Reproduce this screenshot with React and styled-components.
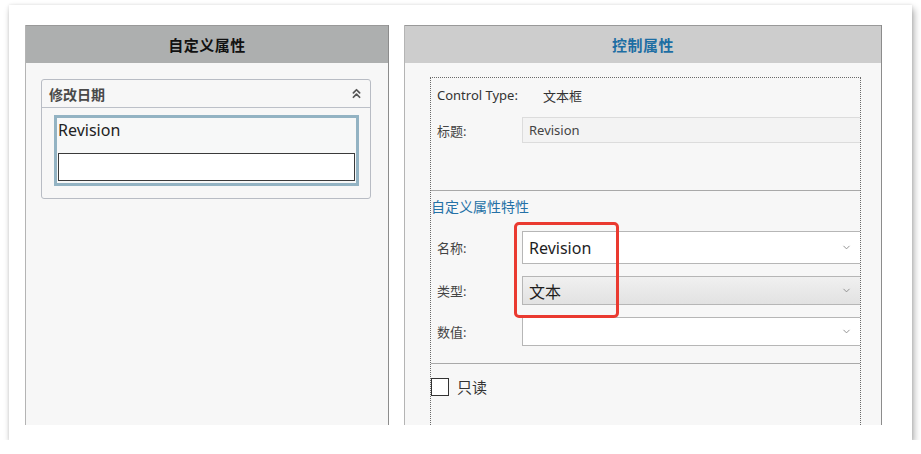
import styled, { createGlobalStyle } from 'styled-components';
import { ChevronsUp, ChevronDown } from 'lucide-react';

const GlobalStyle = createGlobalStyle`
    html, body {
        margin: 0;
        padding: 0;
        background: #ffffff;
    }
    body {
        font-family: "Noto Sans", "Noto Sans CJK SC", sans-serif;
        color: #333;
    }
`;

const Card = styled.div`
    box-sizing: border-box;
    margin: 5px 0 0 9px;
    width: 903px;
    height: 435px;
    padding: 20px 30px 15px 16px;
    background: #fff;
    box-shadow: 2px 4px 7px rgba(0, 0, 0, 0.32), 0 0 3px rgba(0, 0, 0, 0.1);
    display: flex;
    gap: 15px;
`;

const Panel = styled.section`
    box-sizing: border-box;
    width: ${(p) => p.$width}px;
    height: 100%;
    display: flex;
    flex-direction: column;
    background: #f7f7f7;
    border-left: 1px solid #b4b4b4;
    border-right: 1px solid #8c8c8c;
    overflow: hidden;
`;

const PanelHeader = styled.header`
    flex: none;
    height: 38px;
    box-sizing: border-box;
    border-top: 1px solid #999;
    background: ${(p) => p.$bg};
    color: ${(p) => p.$color};
    display: flex;
    align-items: center;
    justify-content: center;
    font-size: 15px;
    font-weight: bold;
    letter-spacing: 0.5px;
`;

/* left side */

const Group = styled.div`
    margin: 16px 0 0 15px;
    width: 330px;
    box-sizing: border-box;
    border: 1px solid #b8bcc4;
    border-radius: 3px;
    padding-bottom: 12px;
`;

const GroupHeader = styled.div`
    height: 28px;
    box-sizing: border-box;
    border-bottom: 1px solid #bcc0c8;
    display: flex;
    align-items: center;
    justify-content: space-between;
    padding: 0 6px 0 7px;
    font-size: 14px;
    font-weight: bold;
    color: #4a4a4a;
    svg {
        color: #555;
    }
`;

const FieldFrame = styled.div`
    margin: 7px 0 0 12px;
    width: 305px;
    box-sizing: border-box;
    border: 3px solid #93b3c3;
    background: #f7f8f8;
    padding: 0 1px 2px;
`;

const FieldCaption = styled.div`
    height: 35px;
    line-height: 24px;
    font-size: 16px;
    color: #222;
`;

const TextBox = styled.div`
    height: 28px;
    box-sizing: border-box;
    border: 1px solid #3a3a3a;
    background: #fff;
`;

/* right side */

const Dotted = styled.div`
    position: relative;
    margin: 14px 0 0 25px;
    width: 431px;
    flex: 1;
    box-sizing: border-box;
    border: 1px dotted #6a6a6a;
    border-bottom: none;
`;

const Section = styled.div`
    box-sizing: border-box;
    height: ${(p) => p.$height}px;
    padding: ${(p) => p.$pad || '0'};
    border-bottom: ${(p) => (p.$line ? '1px solid #a9a9a9' : 'none')};
`;

const InfoRow = styled.div`
    display: flex;
    align-items: center;
    height: 18px;
    padding-left: 6px;
    font-size: 13px;
    color: #333;
    span + span {
        margin-left: 25px;
    }
`;

const Row = styled.div`
    display: grid;
    grid-template-columns: 91px 1fr;
    align-items: center;
    margin-top: ${(p) => p.$top}px;
    height: ${(p) => p.$h}px;
`;

const Label = styled.span`
    padding-left: 6px;
    font-size: 13px;
    color: #444;
`;

const Field = styled.div`
    height: 100%;
    box-sizing: border-box;
    display: flex;
    align-items: center;
    justify-content: space-between;
    padding: 0 8px 0 6px;
    font-size: ${(p) => (p.$large ? 16 : 13)}px;
    color: ${(p) => (p.$large ? '#1e1e1e' : '#444')};
    border: 1px solid ${(p) => (p.$flat ? '#dcdcdc' : '#b6b6b6')};
    border-right: none;
    background: ${(p) =>
        p.$flat ? '#f3f3f3' : p.$combo ? 'linear-gradient(#f0f0f0, #e2e2e2)' : '#fff'};
    svg {
        color: #8a8a8a;
    }
`;

const SectionTitle = styled.div`
    margin-top: 6px;
    height: 20px;
    line-height: 20px;
    font-size: 14px;
    color: #2571a6;
`;

const CheckRow = styled.label`
    display: flex;
    align-items: center;
    gap: 8px;
    padding-top: 13px;
    font-size: 15px;
    line-height: 20px;
    color: #333;
`;

const CheckBox = styled.span`
    width: 18px;
    height: 18px;
    box-sizing: border-box;
    border: 1px solid #333;
    background: #fff;
`;

const Highlight = styled.div`
    position: absolute;
    left: 83px;
    top: 144px;
    width: 105px;
    height: 96px;
    box-sizing: border-box;
    border: 3px solid #ea3a30;
    border-radius: 5px;
    pointer-events: none;
`;

const Combo = ({ children, combo }) => (
    <Field $large $combo={combo}>
        <span>{children}</span>
        <ChevronDown size={11} strokeWidth={2} />
    </Field>
);

export default function App() {
    return (
        <>
            <GlobalStyle />
            <Card>
                <Panel $width={364}>
                    <PanelHeader $bg="#adafaf" $color="#111">自定义属性</PanelHeader>
                    <Group>
                        <GroupHeader>
                            <span>修改日期</span>
                            <ChevronsUp size={15} strokeWidth={2.8} />
                        </GroupHeader>
                        <FieldFrame>
                            <FieldCaption>Revision</FieldCaption>
                            <TextBox />
                        </FieldFrame>
                    </Group>
                </Panel>
                <Panel $width={478}>
                    <PanelHeader $bg="#cdcdcd" $color="#1d6ea3">控制属性</PanelHeader>
                    <Dotted>
                        <Section $height={113} $pad="8px 0 0" $line>
                            <InfoRow>
                                <span>Control Type:</span>
                                <span>文本框</span>
                            </InfoRow>
                            <Row $top={13} $h={26}>
                                <Label>标题:</Label>
                                <Field $flat>Revision</Field>
                            </Row>
                        </Section>
                        <Section $height={167} $line>
                            <SectionTitle>自定义属性特性</SectionTitle>
                            <Row $top={14} $h={33}>
                                <Label>名称:</Label>
                                <Combo>Revision</Combo>
                            </Row>
                            <Row $top={12} $h={29}>
                                <Label>类型:</Label>
                                <Combo combo>文本</Combo>
                            </Row>
                            <Row $top={12} $h={29}>
                                <Label>数值:</Label>
                                <Combo />
                            </Row>
                        </Section>
                        <CheckRow>
                            <CheckBox />
                            只读
                        </CheckRow>
                        <Highlight />
                    </Dotted>
                </Panel>
            </Card>
        </>
    );
}
